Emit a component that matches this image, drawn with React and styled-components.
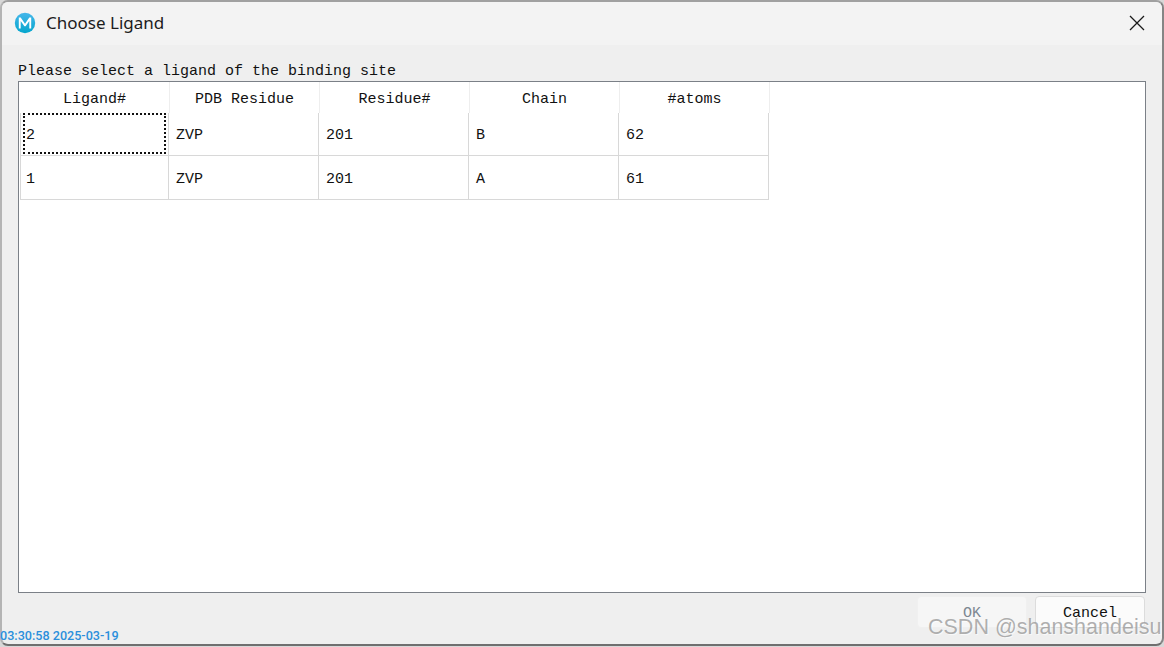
import React from 'react';
import styled, { createGlobalStyle } from 'styled-components';

const columns = ['Ligand#', 'PDB Residue', 'Residue#', 'Chain', '#atoms'];
const rows = [
  ['2', 'ZVP', '201', 'B', '62'],
  ['1', 'ZVP', '201', 'A', '61'],
];

const GlobalStyle = createGlobalStyle`
  html, body {
    margin: 0;
    padding: 0;
    background: #d8d8d8;
  }
`;

function AppIcon() {
  return (
    <svg width="22" height="22" viewBox="0 0 22 22">
      <defs>
        <linearGradient id="ball" x1="0" y1="0" x2="0" y2="1">
          <stop offset="0" stopColor="#45b6ea" />
          <stop offset="1" stopColor="#04a6cd" />
        </linearGradient>
      </defs>
      <circle cx="11" cy="11" r="10.2" fill="url(#ball)" />
      <path
        d="M4.8 16.6V5.4h1.9l4.3 6.4 4.3-6.4h1.9v11.2h-1.9V8.9l-3.7 5.4h-1.2L6.7 8.9v7.7z"
        fill="#ffffff"
      />
    </svg>
  );
}

function CloseIcon() {
  return (
    <svg width="16" height="16" viewBox="0 0 16 16">
      <path d="M1 1l14 14M15 1L1 15" stroke="#1a1a1a" strokeWidth="1.3" fill="none" />
    </svg>
  );
}

export default function App() {
  return (
    <Screen>
      <GlobalStyle />
      <Window>
        <TitleBar>
          <AppIcon />
          <Title>Choose Ligand</Title>
          <CloseButton>
            <CloseIcon />
          </CloseButton>
        </TitleBar>
        <Content>
          <Prompt>Please select a ligand of the binding site</Prompt>
          <TableFrame>
            <HeaderRow>
              {columns.map((name) => (
                <HeaderCell key={name}>{name}</HeaderCell>
              ))}
            </HeaderRow>
            {rows.map((row, rowIndex) => (
              <BodyRow key={row[0]} first={rowIndex === 0}>
                {row.map((value, colIndex) => (
                  <BodyCell key={colIndex} focused={rowIndex === 0 && colIndex === 0}>
                    {value}
                  </BodyCell>
                ))}
              </BodyRow>
            ))}
          </TableFrame>
          <Footer>
            <DialogButton disabled>OK</DialogButton>
            <DialogButton>Cancel</DialogButton>
          </Footer>
        </Content>
      </Window>
      <Timestamp>03:30:58 2025-03-19</Timestamp>
      <Watermark>CSDN @shanshandeisu</Watermark>
    </Screen>
  );
}

const Screen = styled.div`
  position: relative;
  width: 1164px;
  height: 647px;
  overflow: hidden;
  background: #d8d8d8;
`;

const Window = styled.div`
  box-sizing: border-box;
  display: flex;
  flex-direction: column;
  width: 1164px;
  height: 646px;
  border: 2px solid #8f8f8f;
  border-top-color: #a0a0a0;
  border-left-color: #b4b4b4;
  border-bottom-color: #6f6f6f;
  border-right-color: #858585;
  border-radius: 8px;
  background: #efefef;
  overflow: hidden;
`;

const TitleBar = styled.div`
  box-sizing: border-box;
  display: flex;
  align-items: center;
  flex: 0 0 43px;
  padding: 0 17px 2px 12px;
  background: #f3f3f3;
`;

const Title = styled.span`
  margin-left: 10px;
  font-family: 'Noto Sans', 'Open Sans', sans-serif;
  font-size: 17px;
  color: #1c1c1c;
`;

const CloseButton = styled.div`
  display: flex;
  margin-left: auto;
`;

const Content = styled.div`
  display: flex;
  flex: 1;
  flex-direction: column;
  padding: 0 16px;
  font-family: 'Liberation Mono', 'DejaVu Sans Mono', monospace;
  font-size: 15px;
  color: #111111;
`;

const Prompt = styled.div`
  height: 17px;
  margin-top: 18px;
  line-height: 18px;
  white-space: nowrap;
`;

const TableFrame = styled.div`
  box-sizing: border-box;
  height: 512px;
  margin-top: 1px;
  padding-left: 1px;
  border: 1px solid #7b8087;
  background: #ffffff;
`;

const HeaderRow = styled.div`
  display: flex;
  height: 31px;
`;

const HeaderCell = styled.div`
  box-sizing: border-box;
  width: 150px;
  border-right: 1px solid #eeeeee;
  line-height: 35px;
  text-align: center;
  white-space: nowrap;
`;

const BodyRow = styled.div`
  display: flex;
  width: 749px;
  height: ${(props) => (props.first ? '42px' : '43px')};
  border-bottom: 1px solid #d8d8d8;
  line-height: ${(props) => (props.first ? '46px' : '47px')};
`;

const BodyCell = styled.div`
  position: relative;
  box-sizing: border-box;
  width: 150px;
  padding-left: 7px;
  border-left: 1px solid #d8d8d8;
  white-space: nowrap;

  &:first-child {
    width: 148px;
    padding-left: 5px;
  }

  &:last-child {
    width: 151px;
    border-right: 1px solid #d8d8d8;
  }

  ${(props) =>
    props.focused &&
    `
    &::after {
      content: '';
      position: absolute;
      left: 2px;
      top: 0;
      right: 2px;
      bottom: 1px;
      border: 2px dotted #111111;
    }
  `}
`;

const Footer = styled.div`
  display: flex;
  justify-content: flex-end;
  gap: 8px;
  padding: 3px 1px 0 0;
`;

const DialogButton = styled.div`
  box-sizing: border-box;
  width: 110px;
  height: 32px;
  border: 1px solid ${(props) => (props.disabled ? '#f0f0f0' : '#dcdcdc')};
  border-radius: 4px;
  background: ${(props) => (props.disabled ? '#f6f6f6' : '#fbfbfb')};
  color: ${(props) => (props.disabled ? '#7d8791' : '#111111')};
  line-height: 33px;
  text-align: center;
`;

const Timestamp = styled.div`
  position: absolute;
  left: 0;
  top: 628px;
  font-family: Roboto, 'Liberation Sans', sans-serif;
  font-size: 12.6px;
  font-weight: 500;
  line-height: 15px;
  color: #2b8fdc;
  white-space: nowrap;
`;

const Watermark = styled.div`
  position: absolute;
  left: 928px;
  top: 614px;
  font-family: 'Liberation Sans', Arial, sans-serif;
  font-size: 21.5px;
  line-height: 26px;
  color: rgba(150, 150, 150, 0.75);
  text-shadow: 1px 1px 1px rgba(255, 255, 255, 0.7);
  white-space: nowrap;
`;
